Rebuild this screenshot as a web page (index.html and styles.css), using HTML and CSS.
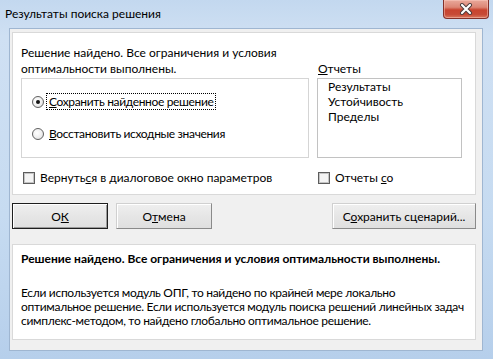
FILE: index.html
```html
<!DOCTYPE html>
<html lang="ru">
<head>
<meta charset="utf-8">
<title>Результаты поиска решения</title>
<link rel="stylesheet" href="styles.css">
</head>
<body>
<div class="window">
  <div class="titlebar">
    <span class="title">Результаты поиска решения</span>
    <div class="close">
      <svg width="14" height="12" viewBox="0 0 14 12">
        <path d="M3 2 L11 10 M11 2 L3 10" stroke="#4a3a3a" stroke-width="4" stroke-linecap="round" fill="none"/>
        <path d="M3 2 L11 10 M11 2 L3 10" stroke="#ffffff" stroke-width="2.2" stroke-linecap="round" fill="none"/>
      </svg>
    </div>
  </div>
  <div class="client">
    <div class="panel top-panel">
      <div class="left-col">
        <p class="msg">Решение найдено. Все ограничения и условия<br>оптимальности выполнены.</p>
        <div class="radiobox">
          <div class="radio-row first">
            <span class="radio checked"></span>
            <span class="radio-label focused"><u>С</u>охранить найденное решение</span>
          </div>
          <div class="radio-row">
            <span class="radio"></span>
            <span class="radio-label"><u>В</u>осстановить исходные значения</span>
          </div>
        </div>
        <div class="check-row">
          <span class="checkbox"></span>
          <span class="check-label">Вернуть<u>с</u>я в диалоговое окно параметров</span>
        </div>
      </div>
      <div class="right-col">
        <div class="list-label"><u>О</u>тчеты</div>
        <div class="listbox">
          <div class="item">Результаты</div>
          <div class="item">Устойчивость</div>
          <div class="item">Пределы</div>
        </div>
        <div class="check-row right">
          <span class="checkbox"></span>
          <span class="check-label">Отчеты <u>с</u>о</span>
        </div>
      </div>
    </div>
    <div class="buttons">
      <button class="btn default">О<u>К</u></button>
      <button class="btn">О<u>т</u>мена</button>
      <button class="btn wide">С<u>о</u>хранить сценарий...</button>
    </div>
    <div class="panel bottom-panel">
      <p class="bold">Решение найдено. Все ограничения и условия оптимальности выполнены.</p>
      <p class="para">Если используется модуль ОПГ, то найдено по крайней мере локально<br>оптимальное решение. Если используется модуль поиска решений линейных задач<br>симплекс-методом, то найдено глобально оптимальное решение.</p>
    </div>
  </div>
</div>
</body>
</html>
```
FILE: styles.css
```css
html, body {
  margin: 0;
  padding: 0;
  background: #c9dcf1;
}
body {
  font-family: Lato, Roboto, "Noto Sans", sans-serif;
  font-size: 12px;
  color: #000;
}
.window {
  position: relative;
  width: 493px;
  height: 359px;
  box-sizing: border-box;
  padding: 0 10px 8px 9px;
  display: flex;
  flex-direction: column;
  background: linear-gradient(180deg, #c3d8ef 0%, #cfe0f3 10%, #c6dbf1 60%, #b6cfeb 100%);
}
.titlebar {
  height: 28px;
  margin: 0 -10px 0 -9px;
  padding-left: 5px;
  display: flex;
  align-items: center;
  flex: none;
}
.title {
  line-height: 16px;
  margin-top: -1px;
  white-space: nowrap;
}
.close {
  position: absolute;
  top: 0;
  right: 4px;
  width: 46px;
  height: 19px;
  box-sizing: border-box;
  border: 1px solid #83312a;
  border-top: none;
  border-radius: 0 0 4px 4px;
  background: linear-gradient(180deg, #e9a99b 0%, #dc8675 40%, #c8442f 55%, #c74a36 80%, #d9775e 100%);
  box-shadow: inset 0 0 0 1px rgba(255, 210, 200, 0.45);
  display: flex;
  align-items: center;
  justify-content: center;
}
.client {
  flex: 1;
  background: #f0f0f0;
  border: 1px solid #9fb6d1;
  padding: 3px 6px 10px 2px;
  display: flex;
  flex-direction: column;
}
.panel {
  background: #fff;
  border: 1px solid #d9d9d9;
  box-sizing: border-box;
}
.top-panel {
  height: 163px;
  display: flex;
  gap: 8px;
  padding: 12px 0 0 8px;
}
.left-col {
  width: 288px;
  flex: none;
}
.msg {
  margin: 0;
  line-height: 16px;
  height: 32px;
  white-space: nowrap;
}
.radiobox {
  margin-top: 1px;
  height: 80px;
  box-sizing: border-box;
  border: 1px solid #d5d5d5;
  padding-top: 14px;
}
.radio-row {
  height: 17px;
  display: flex;
  align-items: center;
  padding-left: 10px;
}
.radio-row + .radio-row {
  margin-top: 15px;
}
.radio {
  width: 12px;
  height: 12px;
  box-sizing: border-box;
  border: 1px solid #606060;
  border-radius: 50%;
  background: radial-gradient(circle at 40% 40%, #ffffff 0%, #f0f0f0 50%, #d8d8d8 100%);
  display: flex;
  align-items: center;
  justify-content: center;
  flex: none;
}
.radio.checked::after {
  content: "";
  width: 4px;
  height: 4px;
  border-radius: 50%;
  background: #141414;
}
.radio-label {
  margin-left: 2px;
  padding: 0 2px;
  line-height: 15px;
  letter-spacing: -0.35px;
  border: 1px dotted transparent;
  white-space: nowrap;
}
.radio-label.focused {
  border-color: #000;
}
.check-row {
  margin-top: 11px;
  height: 17px;
  display: flex;
  align-items: center;
  padding-left: 2px;
}
.check-row.right {
  padding-left: 1px;
}
.checkbox {
  width: 12px;
  height: 12px;
  box-sizing: border-box;
  border: 1px solid #5c5c5c;
  box-shadow: inset 0 0 0 1px #c4c4c4;
  background: #f4f4f4;
  flex: none;
}
.check-label {
  margin-left: 5px;
  white-space: nowrap;
}
.right-col {
  width: 145px;
  flex: none;
}
.list-label {
  margin-top: 16px;
  line-height: 16px;
  height: 16px;
  padding-left: 1px;
}
.listbox {
  margin-top: 1px;
  height: 80px;
  box-sizing: border-box;
  border: 1px solid #c2c2c2;
  padding-left: 10px;
}
.item {
  line-height: 15px;
}
.buttons {
  margin-top: 8px;
  height: 26px;
  display: flex;
  gap: 8px;
  flex: none;
}
.btn {
  width: 96px;
  height: 26px;
  box-sizing: border-box;
  font-family: inherit;
  font-size: 12px;
  color: #000;
  padding: 0;
  background: linear-gradient(180deg, #efefef 0%, #e6e6e6 50%, #dfdfdf 100%);
  border: 1px solid;
  border-color: #d0d0d0 #8a8a8a #8a8a8a #d0d0d0;
  box-shadow: inset 1px 1px 0 #ffffff;
}
.btn.default {
  border: 1px solid #1e1e1e;
  box-shadow: inset 1px 1px 0 #ffffff, inset -1px -1px 0 #9a9a9a;
}
.btn.wide {
  width: 144px;
  margin-left: auto;
}
.bottom-panel {
  margin-top: 15px;
  height: 96px;
  padding: 6px 0 0 8px;
}
.bold {
  margin: 0;
  font-weight: bold;
  line-height: 16px;
  white-space: nowrap;
}
.para {
  margin: 19px 0 0;
  line-height: 14px;
  letter-spacing: -0.3px;
  white-space: nowrap;
}
```
